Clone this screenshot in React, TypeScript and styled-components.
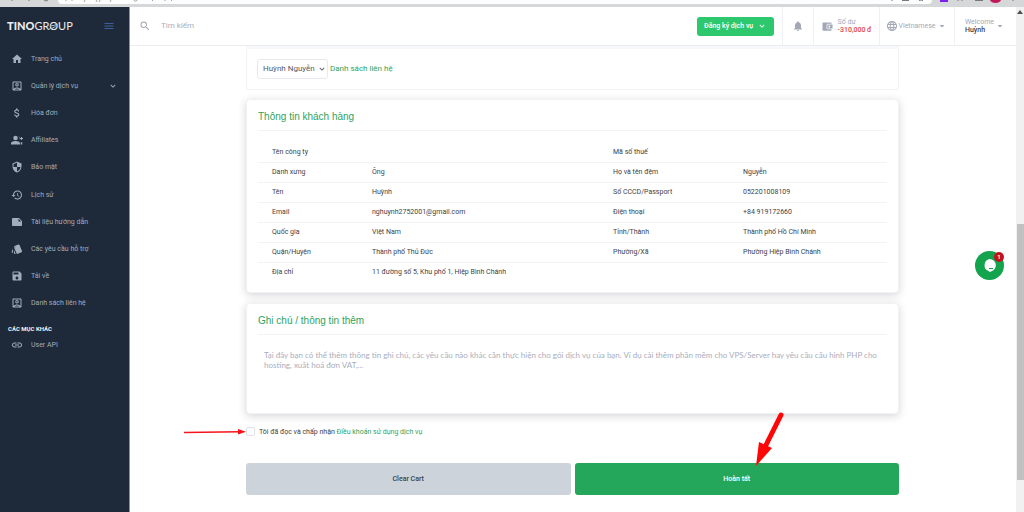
import React from "react";
import styled, { createGlobalStyle } from "styled-components";
import {
  MdHome, MdOutlineAccountBox, MdAttachMoney, MdSecurity, MdHistory, MdNote, MdStyle, MdSave, MdLink,
  MdMenu, MdSearch, MdNotifications, MdLanguage, MdArrowDropDown, MdKeyboardArrowDown,
} from "react-icons/md";

const GlobalStyle = createGlobalStyle`
  *, *::before, *::after { box-sizing: border-box; }
  body { margin: 0; background: #fff; font-family: Roboto, "Noto Sans", sans-serif; font-size: 7px; line-height: 10px; color: #3d4248; overflow: hidden; }
  button, input, select, textarea { font: inherit; color: inherit; margin: 0; }
  button { cursor: pointer; border: 0; padding: 0; background: none; }
  a { text-decoration: none; color: #2fa360; }
  svg { display: block; flex: none; }
`;

const Page = styled.div`
  display: flex;
  flex-direction: column;
  min-height: 100vh;
`;

const BrowserBar = styled.div`
  height: 7px;
  flex: none;
  padding: 0 92px 0 58px;
  background: #d6d7d9;
  position: relative;
`;

const AddressBar = styled.div`
  height: 4px;
  background: #fdfdfd;
  border-radius: 0 0 5px 5px;
`;

const BarMarks = styled.svg<{ $side: "left" | "right" }>`
  position: absolute;
  top: 0;
  ${(p) => p.$side}: 0;
`;

const Body = styled.div`
  flex: 1;
  display: flex;
`;

const Sidebar = styled.aside`
  width: 130px;
  flex: none;
  background: #1e2a3a;
  border-right: 1px solid #8b9199;
`;

const Brand = styled.div`
  height: 38px;
  padding: 0 14px 0 7px;
  display: flex;
  align-items: center;
  justify-content: space-between;
`;

const Logo = styled.a`
  display: flex;
  align-items: center;
  color: #e9ecf0;
  font-family: Lato, sans-serif;
  font-size: 11px;
  line-height: 12px;
  font-weight: 400;
  b { font-weight: 900; }
  span { position: relative; }
`;

const LogoSwoosh = styled.svg`
  position: absolute;
  left: 15px;
  top: 1px;
`;

const MenuButton = styled.button`
  color: #3c5f9c;
`;

const NavList = styled.nav`
  height: 272px;
  display: flex;
  flex-direction: column;
  justify-content: space-between;
`;

const NavLink = styled.a<{ $short?: boolean }>`
  height: ${(p) => (p.$short ? 20 : 27)}px;
  display: flex;
  align-items: center;
  gap: 8px;
  padding: 0 11px;
  color: #a3acbb;
  span { flex: 1; }
`;

const NavHeading = styled.h2`
  margin: 0;
  padding: 7px 8px 1px;
  font-size: 6px;
  line-height: 10px;
  font-weight: 700;
  color: #f2f4f6;
`;

const Column = styled.div`
  flex: 1;
  min-width: 0;
`;

const Header = styled.header`
  height: 39px;
  display: flex;
  align-items: stretch;
  border-bottom: 1px solid #ebedf0;
`;

const Search = styled.label`
  flex: 1;
  display: flex;
  align-items: center;
  gap: 10px;
  padding-left: 9px;
  color: #a4a9b8;
  input {
    border: 0;
    outline: 0;
    padding: 0;
    width: 120px;
    font-size: 8px;
    background: none;
  }
  input::placeholder { color: #a9adb9; opacity: 1; }
`;

const RegisterButton = styled.button`
  align-self: center;
  width: 77px;
  height: 19px;
  margin-right: 8px;
  padding: 0 7px;
  display: flex;
  align-items: center;
  justify-content: space-between;
  border-radius: 3px;
  background: #2dc76d;
  color: #fff;
  font-weight: 500;
`;

const HeaderCell = styled.button<{ $width: number; $gap?: number }>`
  width: ${(p) => p.$width}px;
  border-left: 1px solid #eff1f3;
  display: flex;
  align-items: center;
  justify-content: center;
  gap: ${(p) => p.$gap ?? 0}px;
  color: #a3a8b7;
`;

const Stack = styled.span<{ $tone: string }>`
  display: flex;
  flex-direction: column;
  text-align: left;
  line-height: 8px;
  b { font-weight: 500; color: ${(p) => p.$tone}; }
`;

const Scrollbar = styled.div`
  width: 8px;
  flex: none;
  background: #f1f1f1;
  display: flex;
  flex-direction: column;
  align-items: center;
`;

const ScrollArrow = styled.svg`
  margin-top: 3px;
`;

const Thumb = styled.div`
  width: 7px;
  height: 50vh;
  margin-top: 41vh;
  background: #c1c1c1;
`;

const Content = styled.main`
  padding: 0 117px 17px 116px;
  display: flex;
  flex-direction: column;
`;

const Card = styled.section`
  border: 1px solid #f1f2f4;
  border-radius: 4px;
  background: #fff;
  box-shadow: 0 2px 8px rgba(40, 45, 60, 0.2);
  padding: 9px 11px 10px;
  margin-bottom: 10px;
`;

const ContactCard = styled.section`
  height: 44px;
  margin-bottom: 9px;
  border: 1px solid #f1f2f4;
  border-top: 3px solid #f7f8f9;
  border-radius: 0 0 3px 3px;
  padding: 9px 10px;
  display: flex;
  align-items: center;
  gap: 2px;
  font-size: 8px;
`;

const SelectBox = styled.span`
  display: flex;
  align-items: center;
  width: 71px;
  height: 20px;
  border: 1px solid #e6e9ed;
  border-radius: 3px;
  color: #555b62;
  select {
    flex: 1;
    width: 100%;
    appearance: none;
    border: 0;
    outline: 0;
    background: none;
    padding: 0 0 0 5px;
  }
`;

const CardTitle = styled.h3`
  margin: 0 0 6px;
  font-family: "Liberation Sans", Arial, sans-serif;
  font-size: 10px;
  line-height: 15px;
  font-weight: 400;
  color: #2fa360;
`;

const Divider = styled.hr`
  margin: 0;
  border: 0;
  border-top: 1px solid #f1f3f5;
`;

const InfoTable = styled.table`
  width: 100%;
  margin-top: 11px;
  border-collapse: collapse;
  table-layout: fixed;
  th, td {
    height: 20px;
    padding: 0 0 0 14px;
    text-align: left;
    font-weight: 400;
    white-space: nowrap;
    border-bottom: 1px solid #f1f3f5;
  }
  tr:last-child th, tr:last-child td { border-bottom: 0; }
`;

const Notes = styled.textarea`
  display: block;
  width: 100%;
  height: 68px;
  padding: 15px 6px 0;
  border: 0;
  outline: 0;
  resize: none;
  font-family: Lato, sans-serif;
  font-size: 8px;
  line-height: 10px;
  &::placeholder { color: #a9adbd; opacity: 1; }
`;

const Terms = styled.div`
  position: relative;
  height: 15px;
  display: flex;
  align-items: center;
  gap: 4px;
  input {
    appearance: none;
    width: 9px;
    height: 9px;
    border: 1px solid #dfe2e8;
    border-radius: 2px;
    background: #fff;
  }
`;

const Actions = styled.div`
  margin-top: 24px;
  display: grid;
  grid-template-columns: 1fr 1fr;
  gap: 4px;
  position: relative;
`;

const ActionButton = styled.button<{ $primary?: boolean }>`
  height: 32px;
  border-radius: 3px;
  font-weight: 500;
  background: ${(p) => (p.$primary ? "#25a75b" : "#cdd3da")};
  color: ${(p) => (p.$primary ? "#fff" : "#3d4248")};
`;

const SmallArrow = styled.svg`
  position: absolute;
  right: 100%;
  top: 4px;
`;

const BigArrow = styled.svg`
  position: absolute;
  right: 114px;
  bottom: 28px;
  pointer-events: none;
`;

const ChatButton = styled.button`
  position: fixed;
  right: 20px;
  top: calc(50vh - 5px);
  width: 29px;
  height: 29px;
  border-radius: 50%;
  background: #14a44d;
  display: grid;
  place-items: center;
`;

const ChatBadge = styled.span`
  position: absolute;
  right: 0;
  top: 1px;
  width: 10px;
  height: 10px;
  border-radius: 50%;
  background: #c4121f;
  color: #fff;
  font-size: 6px;
  line-height: 10px;
  font-weight: 700;
`;

const AffiliateIcon = ({ size = 12 }: { size?: number }) => (
  <svg width={size} height={size} viewBox="0 0 24 24" fill="currentColor">
    <circle cx="9" cy="8" r="4.500" />
    <path d="M9 14c-3 0-9 1.300-9 4.500V21h18v-2.500C18 15.300 12 14 9 14z" />
    <path d="M14.500 3.800a4.500 4.500 0 0 1 0 8.400 6 6 0 0 0 0-8.400z" />
    <path d="M20 6v2h-2v2h2v2h2v-2h2V8h-2V6zM19.500 16.500h3V21h-3z" />
  </svg>
);

const WalletIcon = () => (
  <svg width="11" height="11" viewBox="0 0 24 24" fill="currentColor">
    <path fillRule="evenodd" d="M3 3h16a2 2 0 0 1 2 2v1h-8a3 3 0 0 0-3 3v6a3 3 0 0 0 3 3h8v1a2 2 0 0 1-2 2H3a2 2 0 0 1-2-2V5a2 2 0 0 1 2-2zM13 7.500h10v9H13a1.500 1.500 0 0 1-1.500-1.500V9A1.500 1.500 0 0 1 13 7.500zM16 10a2 2 0 1 0 0 4 2 2 0 0 0 0-4z" />
  </svg>
);

const navItems = [
  { icon: MdHome, label: "Trang chủ" },
  { icon: MdOutlineAccountBox, label: "Quản lý dịch vụ", expandable: true },
  { icon: MdAttachMoney, label: "Hóa đơn" },
  { icon: AffiliateIcon, label: "Affiliates" },
  { icon: MdSecurity, label: "Bảo mật" },
  { icon: MdHistory, label: "Lịch sử" },
  { icon: MdNote, label: "Tài liệu hướng dẫn" },
  { icon: MdStyle, label: "Các yêu cầu hỗ trợ" },
  { icon: MdSave, label: "Tải về" },
  { icon: MdOutlineAccountBox, label: "Danh sách liên hệ" },
];

const customerRows = [
  ["Tên công ty", "", "Mã số thuế", ""],
  ["Danh xưng", "Ông", "Họ và tên đệm", "Nguyễn"],
  ["Tên", "Huỳnh", "Số CCCD/Passport", "052201008109"],
  ["Email", "nghuynh2752001@gmail.com", "Điện thoại", "+84 919172660"],
  ["Quốc gia", "Việt Nam", "Tỉnh/Thành", "Thành phố Hồ Chí Minh"],
  ["Quận/Huyện", "Thành phố Thủ Đức", "Phường/Xã", "Phường Hiệp Bình Chánh"],
  ["Địa chỉ", "11 đường số 5, Khu phố 1, Hiệp Bình Chánh"],
];

export default function App() {
  return (
    <Page>
      <GlobalStyle />
      <BrowserBar>
        <AddressBar />
        <BarMarks $side="left" width="190" height="3" fill="none" stroke="#77797c">
          <path d="M12 0v1M29 0v1M44 0c1 1.200 3 1.200 4 0" />
          <path stroke="#a2a4a7" d="M66 0v1M72 0v1M85 0l-1 2M97 0l-1 2M100 0l-1 2M111 0l-1 2M134 0c0 1.500 3 1.500 3 0M153 0l-1 1M165 0v1M172 0l-1 1" />
        </BarMarks>
        <BarMarks $side="right" width="140" height="4" fill="none" stroke="#77797c">
          <path d="M8 0v1M18 0.500h7M35 0.500l2-.5 2 .5M74 0v1M78 0v1M91 .5h8M129 0v1" />
          <path fill="#7b1ff0" stroke="none" d="M56 0h8v2h-8z" />
          <path fill="#c2185b" stroke="none" d="M106 0h11c-1 4-10 4-11 0z" />
        </BarMarks>
      </BrowserBar>
      <Body>
        <Sidebar>
          <Brand>
            <Logo href="#" aria-label="TINOGROUP">
              <b>TINO</b>
              <span>
                GROUP
                <LogoSwoosh width="10" height="10" viewBox="0 0 10 10" fill="none" stroke="#b4c1d4">
                  <path d="M0 8C4 7.500 7 5.500 9 2.500M1 4.500c2 .5 4 .2 6-1" />
                </LogoSwoosh>
              </span>
            </Logo>
            <MenuButton aria-label="Menu"><MdMenu size={12} /></MenuButton>
          </Brand>
          <NavList>
            {navItems.map(({ icon: Icon, label, expandable }) => (
              <NavLink href="#" key={label}>
                <Icon size={12} />
                <span>{label}</span>
                {expandable && <MdKeyboardArrowDown size={10} />}
              </NavLink>
            ))}
          </NavList>
          <NavHeading>CÁC MỤC KHÁC</NavHeading>
          <NavLink href="#" $short><MdLink size={12} /><span>User API</span></NavLink>
        </Sidebar>
        <Column>
          <Header>
            <Search>
              <MdSearch size={12} />
              <input type="search" placeholder="Tìm kiếm" aria-label="Tìm kiếm" />
            </Search>
            <RegisterButton>Đăng ký dịch vụ<MdKeyboardArrowDown size={10} /></RegisterButton>
            <HeaderCell $width={31} aria-label="Thông báo"><MdNotifications size={12} /></HeaderCell>
            <HeaderCell $width={66} $gap={5}>
              <WalletIcon />
              <Stack $tone="#e04848">Số dư<b>-310,000 đ</b></Stack>
            </HeaderCell>
            <HeaderCell $width={75}>
              <MdLanguage size={12} />Vietnamese<MdArrowDropDown size={12} />
            </HeaderCell>
            <HeaderCell $width={62}>
              <Stack $tone="#3d4248">Welcome<b>Huỳnh</b></Stack>
              <MdArrowDropDown size={12} />
            </HeaderCell>
          </Header>
          <Content>
            <ContactCard>
              <SelectBox>
                <select aria-label="Liên hệ" defaultValue="hn">
                  <option value="hn">Huỳnh Nguyễn</option>
                </select>
                <MdKeyboardArrowDown size={10} />
              </SelectBox>
              <a href="#">Danh sách liên hệ</a>
            </ContactCard>
            <Card>
              <CardTitle>Thông tin khách hàng</CardTitle>
              <Divider />
              <InfoTable>
                <colgroup>
                  <col style={{ width: 100 }} />
                  <col />
                  <col style={{ width: 130 }} />
                  <col style={{ width: 158 }} />
                </colgroup>
                <tbody>
                  {customerRows.map(([label, value, label2, value2]) => (
                    <tr key={label}>
                      <th scope="row">{label}</th>
                      <td>{value}</td>
                      {label2 && <th scope="row">{label2}</th>}
                      {label2 && <td>{value2}</td>}
                    </tr>
                  ))}
                </tbody>
              </InfoTable>
            </Card>
            <Card>
              <CardTitle id="notes-title">Ghi chú / thông tin thêm</CardTitle>
              <Divider />
              <Notes
                aria-labelledby="notes-title"
                placeholder="Tại đây bạn có thể thêm thông tin ghi chú, các yêu cầu nào khác cần thực hiện cho gói dịch vụ của bạn. Ví dụ cài thêm phần mềm cho VPS/Server hay yêu cầu cấu hình PHP cho hosting, xuất hoá đơn VAT,..."
              />
            </Card>
            <Terms>
              <input type="checkbox" id="terms" />
              <label htmlFor="terms">Tôi đã đọc và chấp nhận <a href="#">Điều khoản sử dụng dịch vụ</a></label>
              <SmallArrow width="62" height="8" viewBox="0 0 62 8">
                <path d="M0 4.500L56 3.800" stroke="#f5141b" strokeWidth="1.500" />
                <path d="M54 1l8 2.700-8 2.800z" fill="#f5141b" />
              </SmallArrow>
            </Terms>
            <Actions>
              <ActionButton>Clear Cart</ActionButton>
              <ActionButton $primary>Hoàn tất</ActionButton>
              <BigArrow width="30" height="58" viewBox="0 0 30 58">
                <path d="M26 6L10 38" stroke="#ff0505" strokeWidth="5" strokeLinecap="round" />
                <path d="M1 57L4 33l13 6z" fill="#ff0505" />
              </BigArrow>
            </Actions>
          </Content>
        </Column>
        <Scrollbar>
          <ScrollArrow width="6" height="4" viewBox="0 0 6 4"><path d="M3 0l3 4H0z" fill="#505050" /></ScrollArrow>
          <Thumb />
        </Scrollbar>
      </Body>
      <ChatButton aria-label="Chat">
        <svg width="15" height="15" viewBox="0 0 15 15">
          <path d="M7.500 1a6.300 6.300 0 0 1 6.300 6.300c0 3.500-3 6-5.800 6.700l-1.500-1A6.300 6.300 0 0 1 7.500 1z" fill="#fff" />
          <path d="M7 10.500h4" stroke="#14a44d" />
        </svg>
        <ChatBadge>1</ChatBadge>
      </ChatButton>
    </Page>
  );
}
